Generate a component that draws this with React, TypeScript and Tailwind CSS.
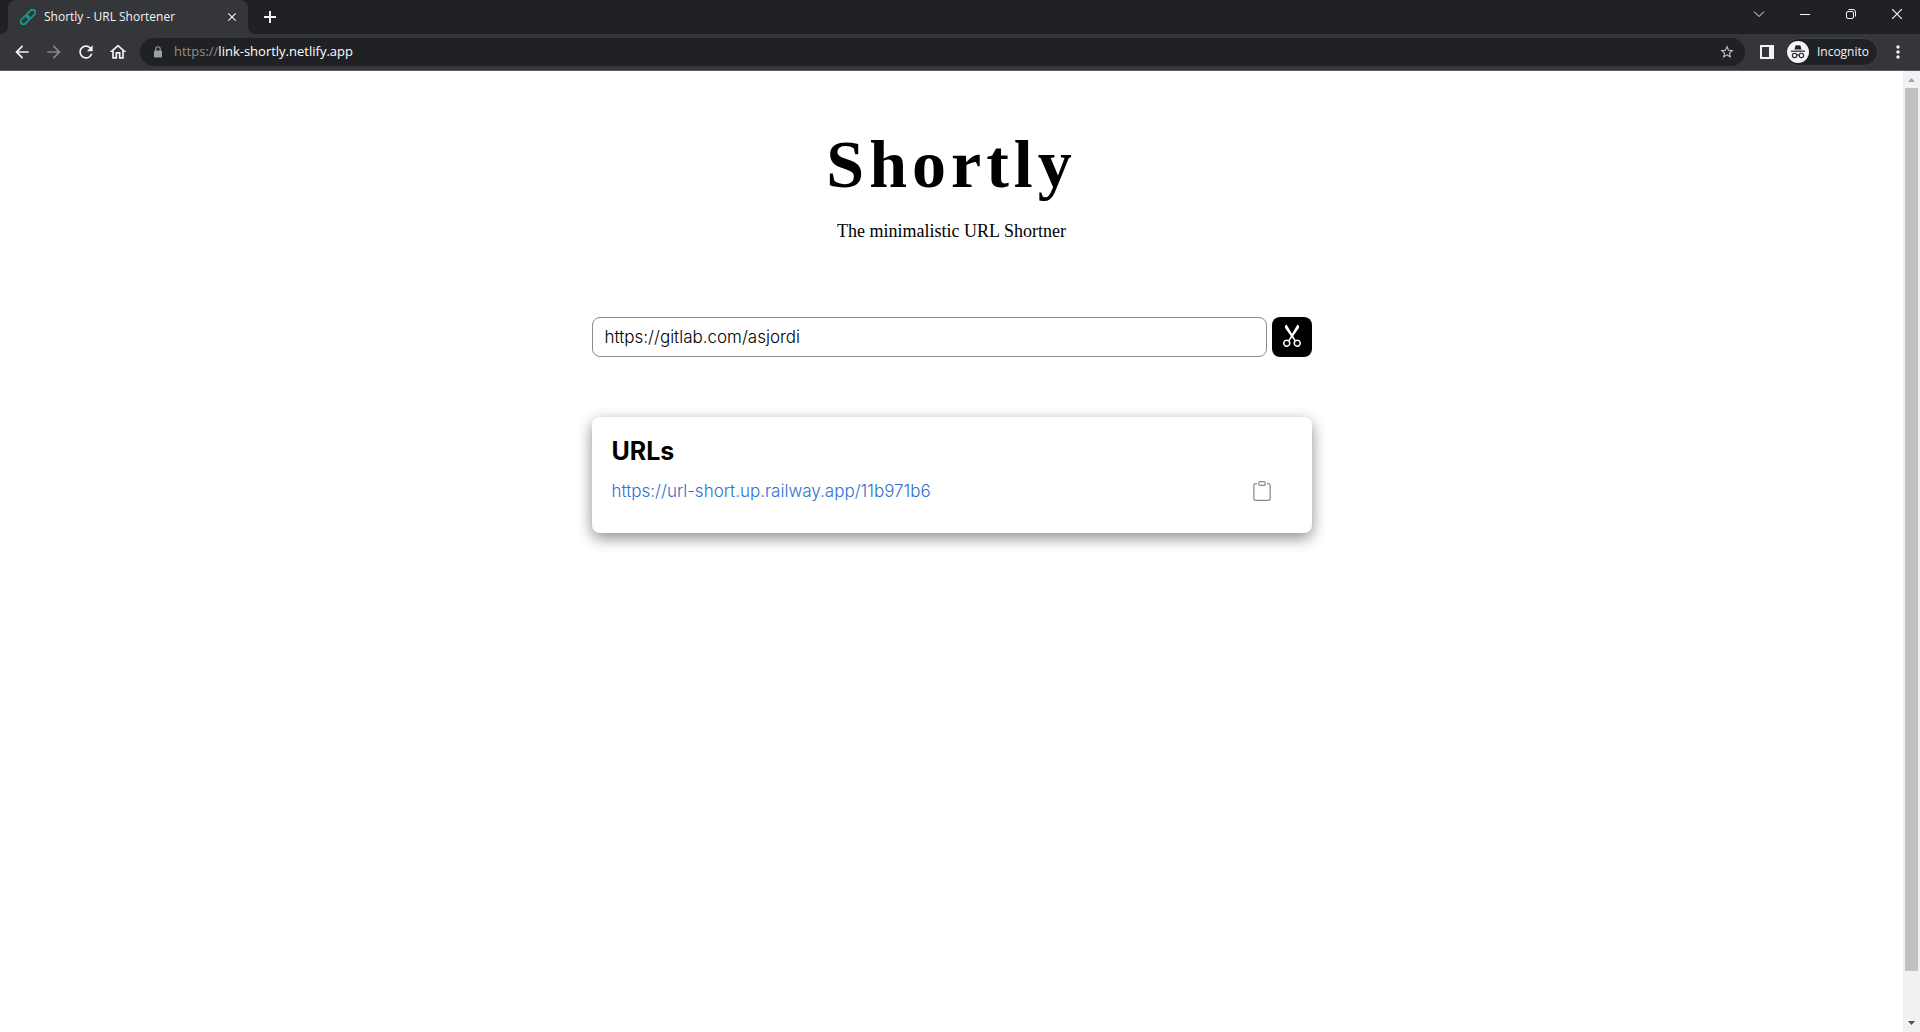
import { useState } from "react";
import type { ReactNode } from "react";
import { BsClipboard, BsScissors } from "react-icons/bs";
import {
  MdArrowBack,
  MdArrowForward,
  MdClose,
  MdMoreVert,
  MdOutlineHome,
  MdRefresh,
  MdStarBorder,
} from "react-icons/md";

function IconButton({ label, className = "", children }: { label: string; className?: string; children: ReactNode }) {
  return (
    <button type="button" aria-label={label} className={`flex shrink-0 items-center justify-center ${className}`}>
      {children}
    </button>
  );
}

function LinkLogo() {
  return (
    <svg viewBox="0 0 16 16" className="size-4 shrink-0 text-[#0f9d8f]" fill="none" stroke="currentColor" strokeWidth="1.8" aria-hidden="true">
      <g transform="rotate(-45 8 8)">
        <rect x="-1.2" y="5.2" width="10" height="5.6" rx="2.8" />
        <rect x="7.2" y="5.2" width="10" height="5.6" rx="2.8" />
      </g>
    </svg>
  );
}

function LockIcon() {
  return (
    <svg viewBox="0 0 8 12" className="h-3 w-2 shrink-0 text-[#9aa0a6]" aria-hidden="true">
      <rect y="4.5" width="8" height="7" rx="1" fill="currentColor" />
      <path d="M1.8 5V3a2.2 2.2 0 0 1 4.4 0v2" fill="none" stroke="currentColor" strokeWidth="1.1" />
    </svg>
  );
}

function IncognitoBadge() {
  return (
    <svg viewBox="0 0 22 22" className="size-[22px]" aria-hidden="true">
      <circle cx="11" cy="11" r="11" fill="#f1f3f4" />
      <path d="M7.5 8.5 8.6 4.6q.2-.6.8-.4l1.6.4 1.6-.4q.6-.2.8.4l1.1 3.9Z" fill="#202124" />
      <path d="M4 10.2h14" stroke="#202124" strokeWidth="1.2" />
      <g fill="none" stroke="#202124" strokeWidth="1.1">
        <circle cx="7.6" cy="14.4" r="2.2" />
        <circle cx="14.4" cy="14.4" r="2.2" />
        <path d="M9.8 14.2q1.2-.8 2.4 0" />
      </g>
    </svg>
  );
}

function TabStrip() {
  return (
    <div className="flex h-[34px] bg-[#202124] pl-2">
      <div className="relative flex w-60 items-center rounded-t-lg bg-[#35363a] pr-2 pl-3 before:absolute before:bottom-0 before:-left-2 before:size-2 before:bg-[radial-gradient(circle_at_0_0,transparent_8px,#35363a_8px)] after:absolute after:-right-2 after:bottom-0 after:size-2 after:bg-[radial-gradient(circle_at_100%_0,transparent_8px,#35363a_8px)]">
        <LinkLogo />
        <span className="ml-2 flex-1 text-xs whitespace-nowrap text-[#f1f3f4]">Shortly - URL Shortener</span>
        <IconButton label="Close tab" className="size-4">
          <MdClose className="size-3.5" />
        </IconButton>
      </div>
      <IconButton label="New tab" className="ml-2 w-7">
        <svg viewBox="0 0 12 12" className="size-3" stroke="currentColor" strokeWidth="2" aria-hidden="true">
          <path d="M6 0v12M0 6h12" />
        </svg>
      </IconButton>
      <div className="ml-auto flex h-7">
        <IconButton label="Search tabs" className="w-[46px]">
          <svg viewBox="0 0 12 12" className="size-3" fill="none" stroke="currentColor" aria-hidden="true">
            <path d="m1 3.5 5 5 5-5" />
          </svg>
        </IconButton>
        <IconButton label="Minimize" className="w-[46px]">
          <svg viewBox="0 0 10 10" className="size-2.5" fill="none" stroke="currentColor" aria-hidden="true">
            <path d="M0 5.5h10" />
          </svg>
        </IconButton>
        <IconButton label="Restore" className="w-[46px]">
          <svg viewBox="0 0 10 10" className="size-2.5" fill="none" stroke="currentColor" aria-hidden="true">
            <rect x=".5" y="2.5" width="7" height="7" rx="1.5" />
            <path d="M2.5.5H7A2.5 2.5 0 0 1 9.5 3v4.5" />
          </svg>
        </IconButton>
        <IconButton label="Close window" className="w-[46px]">
          <svg viewBox="0 0 10 10" className="size-2.5" fill="none" stroke="currentColor" strokeWidth="1.2" aria-hidden="true">
            <path d="m0 0 10 10M10 0 0 10" />
          </svg>
        </IconButton>
      </div>
    </div>
  );
}

function Toolbar() {
  return (
    <div className="flex h-[37px] items-center border-b border-[#5f5b66] bg-[#35363a] pr-3 pl-1.5">
      <IconButton label="Back" className="size-8">
        <MdArrowBack className="size-5" />
      </IconButton>
      <IconButton label="Forward" className="size-8 text-[#86888a]">
        <MdArrowForward className="size-5" />
      </IconButton>
      <IconButton label="Reload" className="size-8">
        <MdRefresh className="size-5" />
      </IconButton>
      <IconButton label="Home" className="size-8">
        <MdOutlineHome className="size-5" />
      </IconButton>
      <div className="ml-1.5 flex h-7 flex-1 items-center rounded-full bg-[#202124] pr-2 pl-3.5">
        <LockIcon />
        <p className="ml-3 flex-1 text-[13px] text-white">
          <span className="text-[#8b8e92]">https://</span>link-shortly.netlify.app
        </p>
        <IconButton label="Bookmark this page" className="size-5 text-[#c4c7ca]">
          <MdStarBorder className="size-4" />
        </IconButton>
      </div>
      <IconButton label="Side panel" className="ml-3 size-5">
        <svg viewBox="0 0 14 14" className="size-3.5" aria-hidden="true">
          <path fill="currentColor" fillRule="evenodd" d="M0 0h14v14H0ZM2 2v10h7V2Z" />
        </svg>
      </IconButton>
      <button type="button" className="ml-2 flex h-7 items-center gap-2 rounded-full border border-[#3c4043] bg-[#202124] pr-2 pl-px text-xs text-[#f1f3f4]">
        <IncognitoBadge />
        Incognito
      </button>
      <IconButton label="Menu" className="ml-2.5 size-5">
        <MdMoreVert className="size-5" />
      </IconButton>
    </div>
  );
}

function Scrollbar() {
  return (
    <div className="flex w-[17px] shrink-0 flex-col items-center bg-[#f1f1f1]" aria-hidden="true">
      <svg viewBox="0 0 17 17" className="size-[17px]">
        <path d="M5 11 8.5 7l3.5 4Z" fill="#a3a3a3" />
      </svg>
      <div className="w-[13px] flex-[883] bg-[#c1c1c1]" />
      <div className="flex-[44]" />
      <svg viewBox="0 0 17 17" className="size-[17px]">
        <path d="m5 6 3.5 4L12 6Z" fill="#505050" />
      </svg>
    </div>
  );
}

function Shortener() {
  const [url, setUrl] = useState("https://gitlab.com/asjordi");
  return (
    <main className="mx-auto w-full max-w-[720px] pt-[51px] font-['Inter',sans-serif] text-black">
      <header className="text-center font-['Liberation_Serif',serif]">
        <h1 className="text-[68px] leading-[85px] font-bold tracking-[5px]">Shortly</h1>
        <p className="mt-3 text-lg leading-6">The minimalistic URL Shortner</p>
      </header>
      <form className="mt-[74px] flex gap-[5px]" onSubmit={(event) => event.preventDefault()}>
        <input
          type="text"
          aria-label="URL to shorten"
          value={url}
          onChange={(event) => setUrl(event.target.value)}
          className="h-10 min-w-0 flex-1 rounded-lg border border-[#8b8b8b] px-3 text-[17px] font-light outline-none"
        />
        <button type="submit" aria-label="Shorten" className="flex size-10 items-center justify-center rounded-lg bg-black pb-1 text-white">
          <BsScissors className="size-6" />
        </button>
      </form>
      <section className="mt-[60px] rounded-lg px-5 pt-[18px] pb-[30px] shadow-[0_5px_15px_rgba(0,0,0,0.45)]">
        <h2 className="text-[25px] leading-8 font-bold">URLs</h2>
        <div className="mt-3 flex items-center justify-between pr-5">
          <a href="https://url-short.up.railway.app/11b971b6" className="text-[17px] leading-6 font-light text-[#2f6fd0]">
            https://url-short.up.railway.app/11b971b6
          </a>
          <IconButton label="Copy URL" className="text-[#8b8b8b]">
            <BsClipboard className="size-5" />
          </IconButton>
        </div>
      </section>
    </main>
  );
}

export default function App() {
  return (
    <div className="flex min-h-screen flex-col bg-white font-['Open_Sans',sans-serif]">
      <div className="text-[#f1f3f4]">
        <TabStrip />
        <Toolbar />
      </div>
      <div className="flex flex-1">
        <div className="flex-1">
          <Shortener />
        </div>
        <Scrollbar />
      </div>
    </div>
  );
}
